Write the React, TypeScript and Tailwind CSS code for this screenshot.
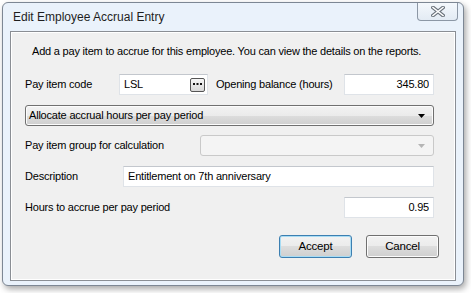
import React from 'react';

const font = { fontFamily: '"Liberation Sans", Arial, sans-serif' };

function TextBox({ value, className = '', right = false, children }: { value: string; className?: string; right?: boolean; children?: React.ReactNode }) {
    return (
        <div
            className={`h-[21px] flex items-center bg-white border border-[#dfe3e8] border-t-[#c3c7cd] px-[4px] text-black ${className}`}
        >
            <span className="flex-1 truncate" style={{ textAlign: right ? 'right' : 'left' }}>{value}</span>
            {children}
        </div>
    );
}

function Arrow({ color }: { color: string }) {
    return (
        <svg width="7" height="4" viewBox="0 0 7 4">
            <path d="M0 0h7L3.5 4z" fill={color} />
        </svg>
    );
}

function Button({ label, primary }: { label: string; primary?: boolean }) {
    return (
        <div
            className={`w-[73px] h-[23px] rounded-[3px] border flex items-center justify-center text-[11.5px] text-black bg-[linear-gradient(#f2f2f2_0%,#ebebeb_50%,#dddddd_50%,#cfcfcf_100%)] ${
                primary ? 'border-[#3c7fb1] shadow-[inset_0_0_0_1px_#a8dcf4]' : 'border-[#707070] shadow-[inset_0_0_0_1px_#fcfcfc]'
            }`}
        >
            {label}
        </div>
    );
}

export default function App() {
    return (
        <div className="w-[471px] h-[293px] bg-white pl-[2px] pt-[2px]" style={font}>
            <div className="w-[462px] h-[284px] rounded-[6px] border border-[#7d8794] bg-[#eaf2fb] shadow-[2px_3px_6px_rgba(0,0,0,0.35)] flex flex-col px-[7px] pb-[4px]">
                <div className="h-[28px] flex items-start justify-between">
                    <span className="mt-[5px] ml-[3px] text-[12px] text-[#1e1e1e]">
                        Edit Employee Accrual Entry
                    </span>
                    <div className="w-[41px] h-[18px] -mr-[2px] rounded-b-[4px] border border-t-0 border-[#8c97a5] bg-[linear-gradient(#f4f8fc,#e3ebf4)] flex items-center justify-center">
                        <svg width="14" height="11" viewBox="0 0 14 11">
                            <path d="M2 1.5L12 9.5M12 1.5L2 9.5" stroke="#6b737c" strokeWidth="3.6" strokeLinecap="square" />
                            <path d="M2 1.5L12 9.5M12 1.5L2 9.5" stroke="#ffffff" strokeWidth="1.6" strokeLinecap="square" />
                        </svg>
                    </div>
                </div>
                <div className="flex-1 border border-[#8a8e94] bg-[#f0f0f0] shadow-[inset_0_0_0_1px_#ffffff] flex flex-col pl-[14px] pr-[21px] text-[11px] tracking-[-0.2px] text-black whitespace-nowrap">
                    <div className="mt-[11px] ml-[7px] h-[14px]">Add a pay item to accrue for this employee. You can view the details on the reports.</div>
                    <div className="mt-[17px] flex items-center">
                        <span className="w-[94px]">Pay item code</span>
                        <TextBox value="LSL" className="w-[89px]">
                            <div className="w-[15px] h-[14px] -mr-[2px] rounded-[2px] border border-[#555] bg-[linear-gradient(#f6f6f6,#d8d8d8)] flex items-center justify-center">
                                <svg width="9" height="3" viewBox="0 0 9 3">
                                    <rect x="0" y="0" width="2" height="2" fill="#111" />
                                    <rect x="3.5" y="0" width="2" height="2" fill="#111" />
                                    <rect x="7" y="0" width="2" height="2" fill="#111" />
                                </svg>
                            </div>
                        </TextBox>
                        <span className="ml-[8px] flex-1">Opening balance (hours)</span>
                        <TextBox value="345.80" right className="w-[90px]" />
                    </div>
                    <div className="mt-[10px] h-[21px] rounded-[3px] border border-[#707070] bg-[linear-gradient(#f2f2f2_0%,#ebebeb_50%,#dddddd_50%,#cfcfcf_100%)] shadow-[inset_0_0_0_1px_#fcfcfc] flex items-center pl-[3px] pr-[8px]">
                        <span className="flex-1">Allocate accrual hours per pay period</span>
                        <Arrow color="#000" />
                    </div>
                    <div className="mt-[9px] flex items-center">
                        <span className="w-[175px]">Pay item group for calculation</span>
                        <div className="flex-1 h-[21px] rounded-[3px] border border-[#c9c9c9] bg-[#f4f4f4] flex items-center justify-end pr-[8px]">
                            <Arrow color="#b5b5b5" />
                        </div>
                    </div>
                    <div className="mt-[10px] flex items-center">
                        <span className="w-[98px]">Description</span>
                        <TextBox value="Entitlement on 7th anniversary" className="flex-1" />
                    </div>
                    <div className="mt-[10px] flex items-center">
                        <span className="flex-1">Hours to accrue per pay period</span>
                        <TextBox value="0.95" right className="w-[90px]" />
                    </div>
                    <div className="mt-[17px] flex justify-end gap-[14px] -mr-[5px]">
                        <Button label="Accept" primary />
                        <Button label="Cancel" />
                    </div>
                </div>
            </div>
        </div>
    );
}
